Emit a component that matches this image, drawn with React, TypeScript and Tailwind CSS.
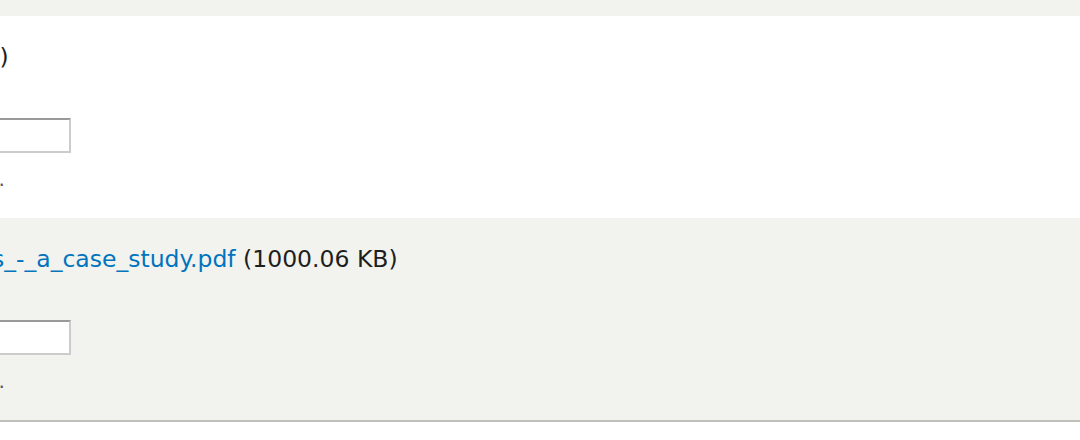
import React from "react";

type FileRow = {
  name: string;
  size: string;
  striped: boolean;
};

const rows: FileRow[] = [
  { name: "outline.pdf", size: "95.3 KB", striped: false },
  { name: "accessible_Websites_-_a_case_study.pdf", size: "1000.06 KB", striped: true },
];

function FileCell({ row }: { row: FileRow }) {
  return (
    <div className={row.striped ? "bg-[#f2f2ee]" : "bg-white"}>
      <div className="-ml-[235px] pt-[24px] pb-[24px]">
        <div className="whitespace-nowrap text-[23.5px] leading-[34px] text-[#1e1e1e]">
          <a href="#" className="text-[#0074bd] no-underline">
            {row.name}
          </a>{" "}
          ({row.size})
        </div>
        <input
          type="text"
          className="mt-[44px] block h-[35px] w-[306px] border-2 border-[#ccc] border-t-[#999] bg-white px-2 text-[23.5px] outline-none"
        />
        <div className="mt-[11px] whitespace-nowrap text-[20.2px] leading-[30px] text-[#595959]">
          Shown as the link label.
        </div>
      </div>
    </div>
  );
}

export default function App() {
  return (
    <div className="h-[440px] w-[1080px] overflow-hidden bg-white font-['DejaVu_Sans',sans-serif]">
      <div className="flex flex-col border-b-2 border-[#bfbfba]">
        <div className="h-[16px] bg-[#f2f2ee]" />
        {rows.map((row) => (
          <FileCell key={row.name} row={row} />
        ))}
      </div>
    </div>
  );
}
